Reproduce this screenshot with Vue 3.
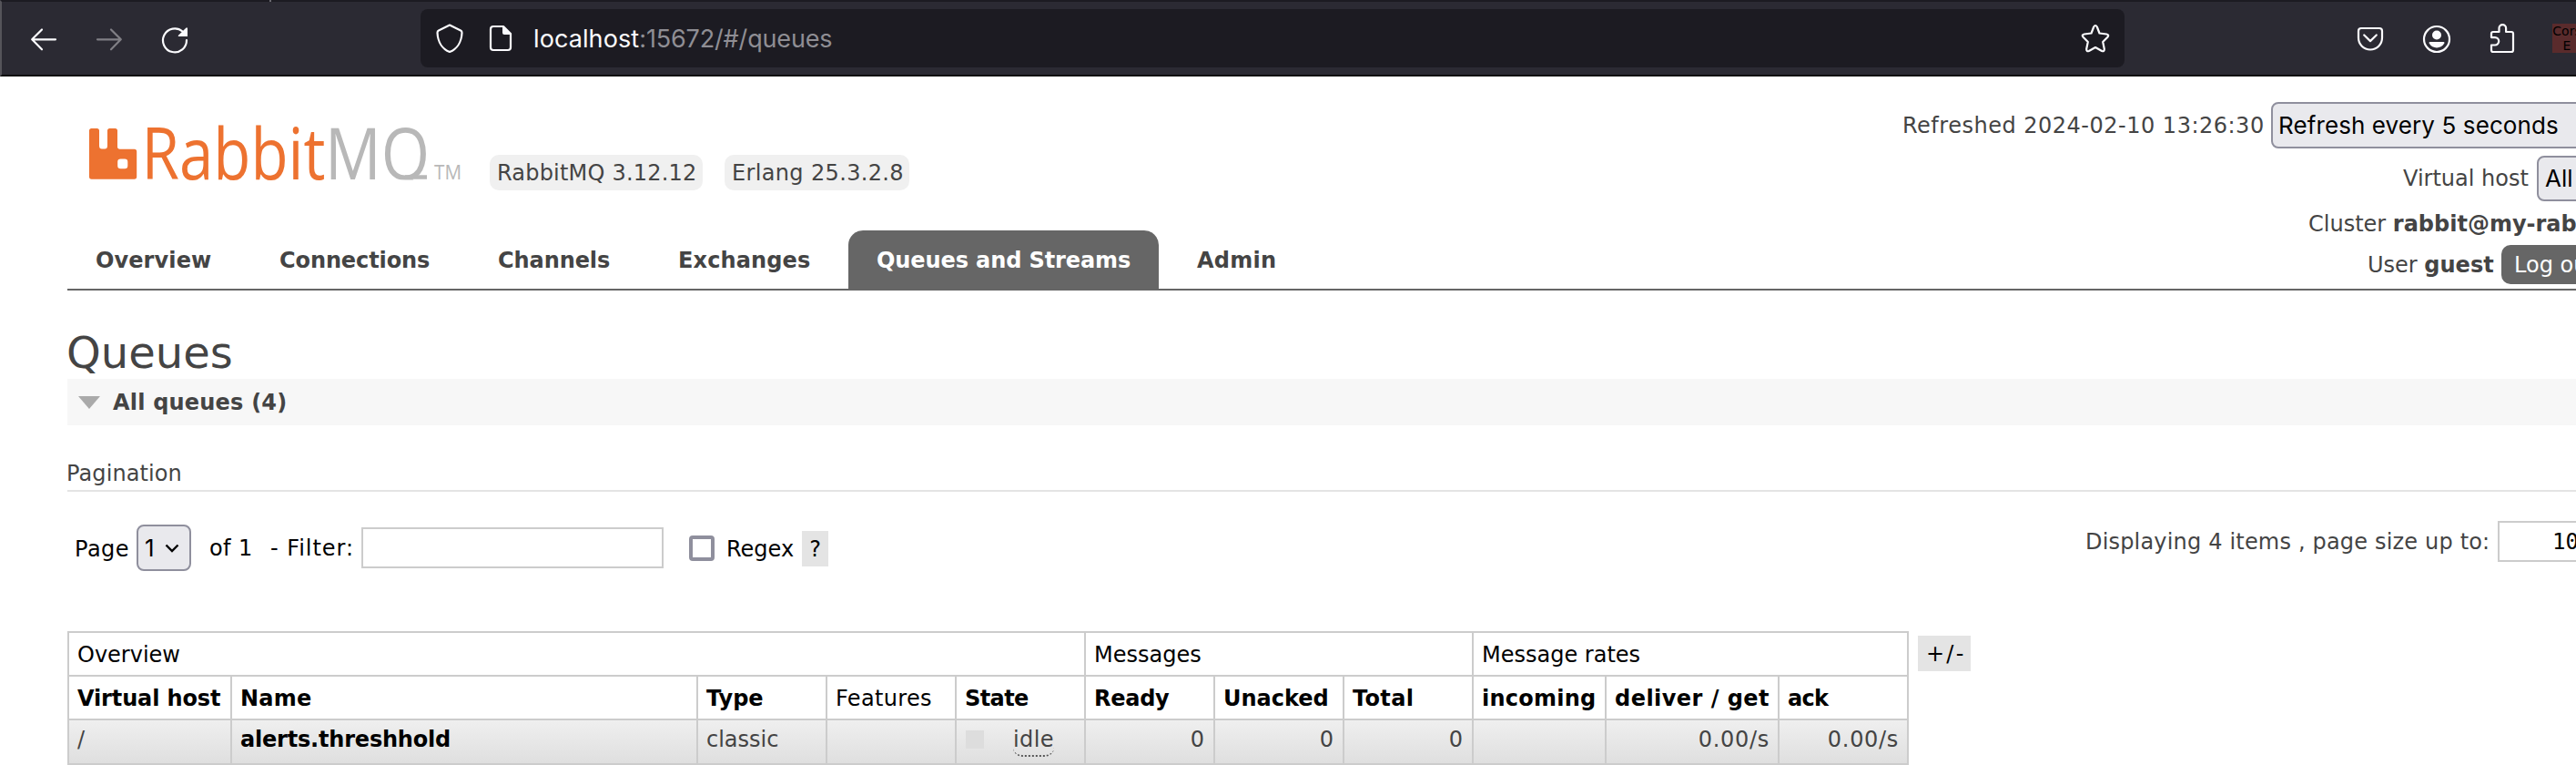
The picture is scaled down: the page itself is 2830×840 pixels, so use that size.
<script setup>
const tabs = [
  { label: 'Overview', cls: 't-overview' },
  { label: 'Connections', cls: 't-connections' },
  { label: 'Channels', cls: 't-channels' },
  { label: 'Exchanges', cls: 't-exchanges' },
  { label: 'Queues and Streams', cls: 't-queues active' },
  { label: 'Admin', cls: 't-admin' },
]
const columns = [
  { label: 'Virtual host', sort: true, cls: 'c-vhost' },
  { label: 'Name', sort: true, cls: 'c-name' },
  { label: 'Type', sort: true, cls: '' },
  { label: 'Features', sort: false, cls: 'ls3' },
  { label: 'State', sort: true, cls: 'c-state' },
  { label: 'Ready', sort: true, cls: 'c-ready' },
  { label: 'Unacked', sort: true, cls: '' },
  { label: 'Total', sort: true, cls: 'ls3' },
  { label: 'incoming', sort: true, cls: 'ls2' },
  { label: 'deliver / get', sort: true, cls: 'ls4' },
  { label: 'ack', sort: true, cls: 'c-ack' },
]
</script>

<template>
  <div class="window">
    <div class="toolbar">
      <span class="tab-tick"></span>
      <svg class="ico back" viewBox="0 0 32 32"><path d="M29 16.3H3.5M14 5.5 3.2 16.3 14 27.3" /></svg>
      <svg class="ico forward" viewBox="0 0 32 32"><path d="M3 16.3h25.500M18 5.500 28.800 16.300 18 27.300" /></svg>
      <svg class="ico reload" viewBox="0 0 32 32">
        <path d="M29 17a13 13 0 1 1-4.500-9.500" />
        <path class="solid" d="M30 3.500V13H20.500c-.8 0-1-.8-.5-1.300L28.500 3.500z" />
      </svg>
      <div class="urlbar">
        <svg class="ico shield" viewBox="0 0 32 32"><path d="M16 1.600 3.900 7.600Q2.500 8.300 2.500 10C3 20 8 28 16 31c8-3 13-11 13.500-21q0-1.700-1.400-2.400z" /></svg>
        <svg class="ico doc" viewBox="0 0 32 32">
          <path d="M19 3H8Q5 3 5 6v20q0 3 3 3h16q3 0 3-3V11z" />
          <path class="solid" d="M18 2l10 10h-8q-2 0-2-2z" />
        </svg>
        <span class="url"><b>localhost</b>:15672/#/queues</span>
        <svg class="ico star" viewBox="0 0 32 32"><path d="M14.200 3.500q1.800-3 3.600 0L20.500 10.500 28.200 11.500q3.300.7 1.200 3.200L24.200 20 25.800 27.800q.2 3.200-2.700 2.200L16 26 8.900 30q-2.900 1-2.700-2.200L7.800 20 2.600 14.700q-2.100-2.500 1.200-3.200L11.500 10.500z" /></svg>
      </div>
      <svg class="ico pocket" viewBox="0 0 32 32"><path d="M6 5h20q3 0 3 3v7.500a13 13 0 0 1-26 0V8q0-3 3-3zM9.200 12.500l6.800 6.600 6.800-6.600" /></svg>
      <svg class="ico account" viewBox="0 0 32 32">
        <circle cx="16" cy="17" r="14" />
        <circle class="solid" cx="16" cy="12.500" r="5" />
        <path class="solid" d="M8.500 20h15q1.500 0 .8 1.500c-3.600 6.500-13 6.500-16.600 0Q7 20 8.500 20z" />
      </svg>
      <svg class="ico puzzle" viewBox="0 0 32 32"><path d="M11.500 9V5a3.800 3.800 0 0 1 7.600 0v4H25q2 0 2 2v18q0 2-2 2H5q-2 0-2-2v-5.500h4a4.200 4.200 0 0 0 0-8.400H3V11q0-2 2-2z" /></svg>
      <div class="ext"><span>Cors</span><span>E</span></div>
    </div>

    <header class="header">
      <div class="left">
        <div class="brand">
          <svg class="logo" viewBox="0 0 412 64">
            <defs><clipPath id="baseline"><rect x="0" y="-10" width="412" height="66.500" /></clipPath></defs>
            <path fill="#ed7230" fill-rule="evenodd" d="M2.500 0h6Q11 0 11 2.500V19q0 3.500 3 3.500h3q3 0 3-3.500V2.500Q20 0 22.500 0h6Q31 0 31 2.500V20q0 2.700 2.700 2.700H49.500q2.700 0 2.700 2.700V53q0 2.700-2.700 2.700h-47Q0 55.700 0 53V2.500Q0 0 2.500 0zM34.500 33.500q-3.300 0-3.300 3.300V41q0 3.300 3.300 3.300H39q3.300 0 3.300-3.300V36.800q0-3.300-3.300-3.300z" />
            <text class="word" x="57.500" y="55.700" textLength="202" lengthAdjust="spacingAndGlyphs" fill="#ed7230">Rabbit</text>
            <g clip-path="url(#baseline)" fill="#b8b8b8">
              <text class="word" x="259" y="55.700" textLength="115" lengthAdjust="spacingAndGlyphs">MQ</text>
              <path d="M347 51.300h24v4.400h-24z" />
            </g>
            <text class="tm" x="379" y="55.700" textLength="30" lengthAdjust="spacingAndGlyphs" fill="#b8b8b8">TM</text>
          </svg>
          <span class="pill p1">RabbitMQ 3.12.12</span>
          <span class="pill p2">Erlang 25.3.2.8</span>
        </div>
        <nav class="tabs">
          <a v-for="t in tabs" :key="t.label" :class="t.cls">{{ t.label }}</a>
        </nav>
      </div>
      <div class="status">
        <div class="row r1"><span class="refreshed">Refreshed 2024-02-10 13:26:30</span><span class="select">Refresh every 5 seconds</span></div>
        <div class="row r2"><span>Virtual host</span><span class="select">All</span></div>
        <div class="row r3"><span>Cluster <b>rabbit@my-rabbit</b></span></div>
        <div class="row r4"><span>User <b>guest</b></span><span class="logout">Log out</span></div>
      </div>
    </header>

    <main>
      <h1>Queues</h1>
      <h2><svg class="tri" viewBox="0 0 24 14"><path d="M0 0h24L12 14z" fill="#aaa" /></svg><span>All queues (4)</span></h2>
      <h3>Pagination</h3>
      <div class="pager">
        <span class="page">Page</span>
        <span class="select num">1<svg class="chev" viewBox="0 0 16 10"><path d="M1.500 1.500 8 8l6.500-6.500" /></svg></span>
        <span class="of">of 1</span>
        <span class="filter">- Filter:</span>
        <span class="box filter-input"></span>
        <span class="check"></span>
        <span class="regex">Regex</span>
        <span class="help">?</span>
        <div class="sizing"><span class="displaying">Displaying 4 items , page size up to:</span><span class="box size">100</span></div>
      </div>

      <div class="tablewrap">
        <table>
          <colgroup>
            <col class="w179" /><col class="w512" /><col v-for="n in 6" :key="n" class="w142" /><col class="w145" /><col class="w191" /><col class="w142" />
          </colgroup>
          <thead>
            <tr><th colspan="5">Overview</th><th colspan="3">Messages</th><th colspan="3">Message rates</th></tr>
            <tr><th v-for="c in columns" :key="c.label" :class="[c.cls, { sort: c.sort }]">{{ c.label }}</th></tr>
          </thead>
          <tbody>
            <tr>
              <td>/</td><td class="qname">alerts.threshhold</td><td>classic</td><td></td>
              <td><div class="state"><i></i><abbr>idle</abbr></div></td>
              <td class="r">0</td><td class="r">0</td><td class="r">0</td><td class="r"></td>
              <td class="r rate">0.00/s</td><td class="r rate">0.00/s</td>
            </tr>
          </tbody>
        </table>
        <span class="plusminus">+/-</span>
      </div>
    </main>
  </div>
</template>

<style>
html, body { overflow: hidden; background: #fff; }
</style>

<style scoped>
* { box-sizing: border-box; }
.window { width: 2830px; height: 840px; overflow: hidden; background: #fff; color: #444; font: 24px "DejaVu Sans", Verdana, sans-serif; white-space: nowrap; }

.toolbar { position: relative; display: flex; align-items: flex-start; height: 84px; padding-left: 30px; background: #2b2a33; border-top: 2px solid #1c1b22; border-bottom: 2px solid #0c0c0d; border-left: 2px solid #55545a; }
.tab-tick { position: absolute; left: 294px; top: -2px; width: 2px; height: 2px; background: #6a6970; }
.ico { flex: none; width: 32px; height: 32px; margin-top: 24px; fill: none; stroke: #fbfbfe; stroke-width: 2.2; stroke-linecap: round; stroke-linejoin: round; overflow: visible; }
.ico .solid { fill: #fbfbfe; stroke: none; }
.back, .forward, .reload { margin-top: 25px; }
.forward { margin-left: 40px; stroke: #807f85; }
.reload { margin-left: 40px; }
.urlbar { display: flex; flex: none; width: 1872px; height: 64px; margin: 8px 0 0 254px; padding-left: 16px; background: #1c1b22; border-radius: 8px; }
.urlbar .ico { margin-top: 16px; }
.urlbar .doc { margin-left: 24px; }
.url { width: 1698px; margin-left: 20px; font: 27px/66px Inter, sans-serif; letter-spacing: -0.15px; color: #8f8e94; }
.url b { font-weight: 400; color: #fbfbfe; letter-spacing: 0.1px; }
.urlbar .star { margin-left: 2px; }
.pocket { margin-left: 254px; }
.account { margin-left: 41px; }
.puzzle { margin-left: 41px; }
.ext { display: flex; flex: none; flex-direction: column; align-items: center; width: 32px; height: 32px; margin: 24px 0 0 38px; background: #5a2b2c; color: #000; font: 14px/16px "DejaVu Sans", sans-serif; }

.header { display: flex; justify-content: space-between; height: 235px; margin-left: 74px; border-bottom: 2px solid #666; }
.left { display: flex; flex-direction: column; justify-content: space-between; }
.brand { display: flex; align-items: flex-start; padding: 57px 0 0 24px; }
.logo { width: 412px; height: 64px; overflow: visible; }
.word { font: 78px "Open Sans", sans-serif; }
.tm { font: 21px "Open Sans", sans-serif; }
.pill { height: 39px; margin-top: 29px; padding: 0 0 0 8px; border-radius: 10px; background: #f0f0f0; line-height: 41px; }
.p1 { width: 234px; margin-left: 28px; letter-spacing: 0.2px; }
.p2 { width: 203px; margin-left: 24px; letter-spacing: 0.35px; }
.tabs { display: grid; grid-template-columns: 202px 240px 198px 218px 352px 130px; height: 64px; font-weight: 700; }
.tabs a { height: 64px; padding: 3px 0 0 31px; line-height: 61px; }
.t-overview { letter-spacing: 0.1px; }
.t-connections { letter-spacing: -0.1px; }
.t-channels { letter-spacing: -0.08px; }
.t-exchanges { letter-spacing: 0.13px; }
.t-queues { letter-spacing: -0.1px; }
.t-admin { letter-spacing: 0.25px; }
.tabs .active { width: 341px; border-radius: 16px 16px 0 0; background: #666; color: #fff; }

.status { width: 740px; padding-top: 28px; }
.row { display: flex; align-items: center; }
.row > span { flex: none; }
.select { display: block; flex: none; border: 2px solid #8f8f9d; border-radius: 8px; background: #e9e9ed; color: #000; font: 26px/47px Inter, sans-serif; padding-left: 6px; }
.r1 .select { width: 370px; height: 51px; letter-spacing: 0.1px; }
.r1 span:first-child { letter-spacing: 0.5px; width: 405px; }
.r2 { margin-top: 8px; padding-left: 550px; }
.r2 .select { width: 200px; height: 50px; line-height: 46px; padding-left: 7px; }
.r2 span:first-child { width: 147px; }
.r3 { height: 32px; margin-top: 9px; padding-left: 446px; }
.r4 { height: 43px; margin-top: 7px; padding-left: 511px; }
.r4 > span:first-child { width: 147px; }
.logout { height: 43px; padding: 0 14px; border-radius: 10px; background: #666; color: #fff; line-height: 44px; }

main { padding-left: 74px; }
h1 { margin: 41px 0 0 -1px; font-size: 48px; font-weight: 400; line-height: 55px; height: 56px; }
h2 { display: flex; align-items: center; height: 51px; margin: 0; padding-left: 12px; background: #f7f7f7; font-size: 24px; line-height: 51px; letter-spacing: 0.2px; }
.tri { width: 24px; height: 14px; }
h2 span { margin-left: 14px; padding-top: 1px; }
h3 { height: 73px; margin: 0; padding-top: 37px; border-bottom: 2px solid #e4e4e4; font-size: 24px; font-weight: 400; line-height: 32px; letter-spacing: 0.1px; text-indent: -1px; }
.pager { display: flex; align-items: center; height: 51px; margin-top: 36px; padding-left: 8px; color: #000; }
.pager > * { flex: none; }
.page { width: 68px; padding-top: 3px; letter-spacing: 0.5px; }
.num { display: flex; align-items: center; width: 60px; height: 51px; padding-left: 7px; }
.chev { width: 16px; height: 10px; margin-left: 11px; fill: none; stroke: #000; stroke-width: 2.4; }
.of { width: 67px; margin-left: 20px; letter-spacing: 0.4px; }
.filter { width: 100px; letter-spacing: 0.96px; }
.box { flex: none; border: 2px solid #ccc; background: #fff; height: 45px; }
.filter-input { width: 332px; }
.check { width: 28px; height: 28px; margin-left: 28px; border: 4px solid #8f8f9d; border-radius: 4px; }
.regex { width: 83px; margin-left: 13px; padding-top: 3px; }
.help { width: 29px; height: 39px; margin-top: 2px; background: #e4e4e4; text-align: center; line-height: 40px; }
.sizing { display: flex; align-self: flex-start; align-items: center; height: 45px; margin: -4px 0 0 1381px; color: #444; }
.displaying { width: 453px; letter-spacing: 0.18px; }
.size { width: 100px; padding-left: 58px; color: #000; font: 24px/42px "DejaVu Sans Mono", monospace; }

.tablewrap { display: flex; align-items: flex-start; margin-top: 66px; }
table { width: 2023px; table-layout: fixed; border-spacing: 0; border-right: 2px solid #ccc; border-bottom: 2px solid #ccc; }
.w179 { width: 179px; } .w512 { width: 512px; } .w142 { width: 142px; } .w145 { width: 146px; } .w191 { width: 190px; }
th, td { height: 48px; padding: 0 0 0 9px; border-top: 2px solid #ccc; border-left: 2px solid #ccc; text-align: left; font-weight: 400; line-height: 30px; }
th { color: #000; padding-top: 6px; padding-bottom: 4px; }
.sort { font-weight: 700; }
td { height: 49px; padding-bottom: 5px; background: linear-gradient(#efefef, #dfdfdf); }
.c-vhost { letter-spacing: -0.13px; }
.c-name { letter-spacing: 0.24px; }
.c-state { letter-spacing: -0.6px; }
.c-ready { letter-spacing: -0.28px; }
.c-ack { letter-spacing: -0.7px; }
.ls2 { letter-spacing: 0.24px; }
.ls3 { letter-spacing: 0.33px; }
.ls4 { letter-spacing: 0.45px; }
.qname { color: #000; font-weight: 700; letter-spacing: -0.2px; }
.r { padding-right: 10px; text-align: right; }
.rate { padding-right: 9px; letter-spacing: 0.7px; }
.state { display: flex; align-items: center; }
.state i { width: 20px; height: 20px; margin-left: 1px; background: #ddd; }
.state abbr { height: 34px; margin: 0 0 -4px 32px; border-bottom: 2px dotted #555; border-radius: 0 0 10px 10px; letter-spacing: 0.4px; line-height: 30px; }
.plusminus { width: 58px; height: 39px; margin: 5px 0 0 10px; padding-left: 9px; background: #e4e4e4; color: #000; line-height: 40px; letter-spacing: 2.2px; }
</style>
